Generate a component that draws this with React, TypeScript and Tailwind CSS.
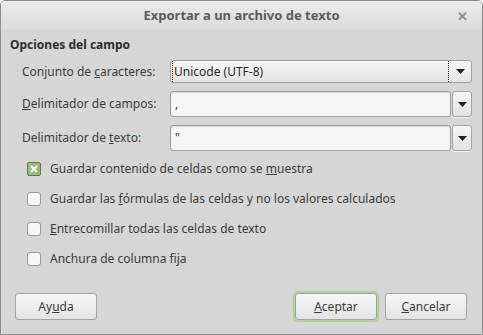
import React from "react";

const font = { fontFamily: '"Noto Sans", "Open Sans", sans-serif' };

function Arrow() {
  return (
    <svg width="9" height="5" viewBox="0 0 9 5">
      <path d="M0 0h9L4.5 5z" fill="#222" />
    </svg>
  );
}

function ComboField({ value }: { value: string }) {
  return (
    <div className="flex items-center gap-px">
      <div className="flex-1 h-[26px] rounded-[3px] border border-[#9d9d9d] bg-[#f5f5f5] shadow-[inset_0_1px_1px_rgba(0,0,0,0.12)] flex items-center pl-[4px] text-[12px] text-[#3c3c3c]">
        {value}
      </div>
      <button className="w-[20px] h-[26px] rounded-[3px] border border-[#a3a3a3] bg-gradient-to-b from-[#f6f6f6] to-[#e2e2e2] flex items-center justify-center shadow-[0_1px_0_rgba(255,255,255,0.6)]">
        <Arrow />
      </button>
    </div>
  );
}

function CheckRow({ checked, children }: { checked?: boolean; children: React.ReactNode }) {
  return (
    <div className="flex items-center h-[30px] pl-[17px]">
      {checked ? (
        <div className="w-[14px] h-[14px] rounded-[2px] border border-[#5f7a45] bg-[#9bb97c] flex items-center justify-center">
          <svg width="8" height="8" viewBox="0 0 8 8">
            <path d="M1 1L7 7M7 1L1 7" stroke="#fff" strokeWidth="2" />
          </svg>
        </div>
      ) : (
        <div className="w-[14px] h-[14px] rounded-[3px] border border-[#9a9a9a] bg-[#f6f6f6]" />
      )}
      <span className="ml-[9px] text-[12px] text-[#3c3c3c]">{children}</span>
    </div>
  );
}

function Btn({ children, focused }: { children: React.ReactNode; focused?: boolean }) {
  return (
    <button
      className={`w-[82px] h-[27px] rounded-[3px] border border-[#a2a2a2] bg-gradient-to-b from-[#f7f7f7] to-[#e3e3e3] text-[12px] text-[#3c3c3c] flex items-center justify-center ${
        focused ? "outline-2 outline-[#b3cf97]" : ""
      }`}
    >
      {children}
    </button>
  );
}

export default function App() {
  return (
    <div
      style={font}
      className="w-[483px] h-[335px] bg-[#d6d6d6] border border-[#8c8c8c] rounded-t-[5px] overflow-hidden flex flex-col"
    >
      <div className="h-[29px] shrink-0 bg-gradient-to-b from-[#ececec] to-[#dadada] relative flex items-center justify-center">
        <span className="text-[13px] font-bold text-[#5c5c5c]">Exportar a un archivo de texto</span>
        <span className="absolute right-[14px] top-[6px] text-[13px] font-bold text-[#8d8d8d]">✕</span>
      </div>

      <div className="flex-1 flex flex-col pl-[9px] pr-[10px]">
        <div className="mt-[6px] text-[12px] font-bold text-[#2e2e2e]">Opciones del campo</div>

        <div className="grid grid-cols-[148px_1fr] items-center gap-y-[8px] pl-[12px] mt-[6px]">
          <span className="text-[12px] text-[#3c3c3c]">
            Conjunto de <u>c</u>aracteres:
          </span>
          <div className="h-[23px] rounded-[3px] border border-[#a0a0a0] bg-gradient-to-b from-[#f7f7f7] to-[#e4e4e4] flex items-center">
            <div className="flex-1 h-full flex items-center ml-[1px] border-l border-r border-dotted border-[#222] pl-[1px] text-[12px] text-[#2a2a2a]">
              Unicode (UTF-8)
            </div>
            <div className="w-[22px] flex justify-center">
              <Arrow />
            </div>
          </div>

          <span className="text-[12px] text-[#3c3c3c]">
            <u>D</u>elimitador de campos:
          </span>
          <ComboField value="," />

          <span className="text-[12px] text-[#3c3c3c]">
            Delimitador de <u>t</u>exto:
          </span>
          <ComboField value={'"'} />
        </div>

        <div className="mt-[3px] flex flex-col">
          <CheckRow checked>
            Guardar contenido de celdas como se <u>m</u>uestra
          </CheckRow>
          <CheckRow>
            Guardar las <u>f</u>órmulas de las celdas y no los valores calculados
          </CheckRow>
          <CheckRow>
            <u>E</u>ntrecomillar todas las celdas de texto
          </CheckRow>
          <CheckRow>Anchura de columna fija</CheckRow>
        </div>

        <div className="mt-auto mb-[14px] mr-[5px] flex items-center pl-[5px]">
          <Btn>
            Ay<u>u</u>da
          </Btn>
          <div className="flex-1" />
          <Btn focused>
            <u>A</u>ceptar
          </Btn>
          <div className="w-[8px]" />
          <Btn>
            <u>C</u>ancelar
          </Btn>
        </div>
      </div>
    </div>
  );
}
